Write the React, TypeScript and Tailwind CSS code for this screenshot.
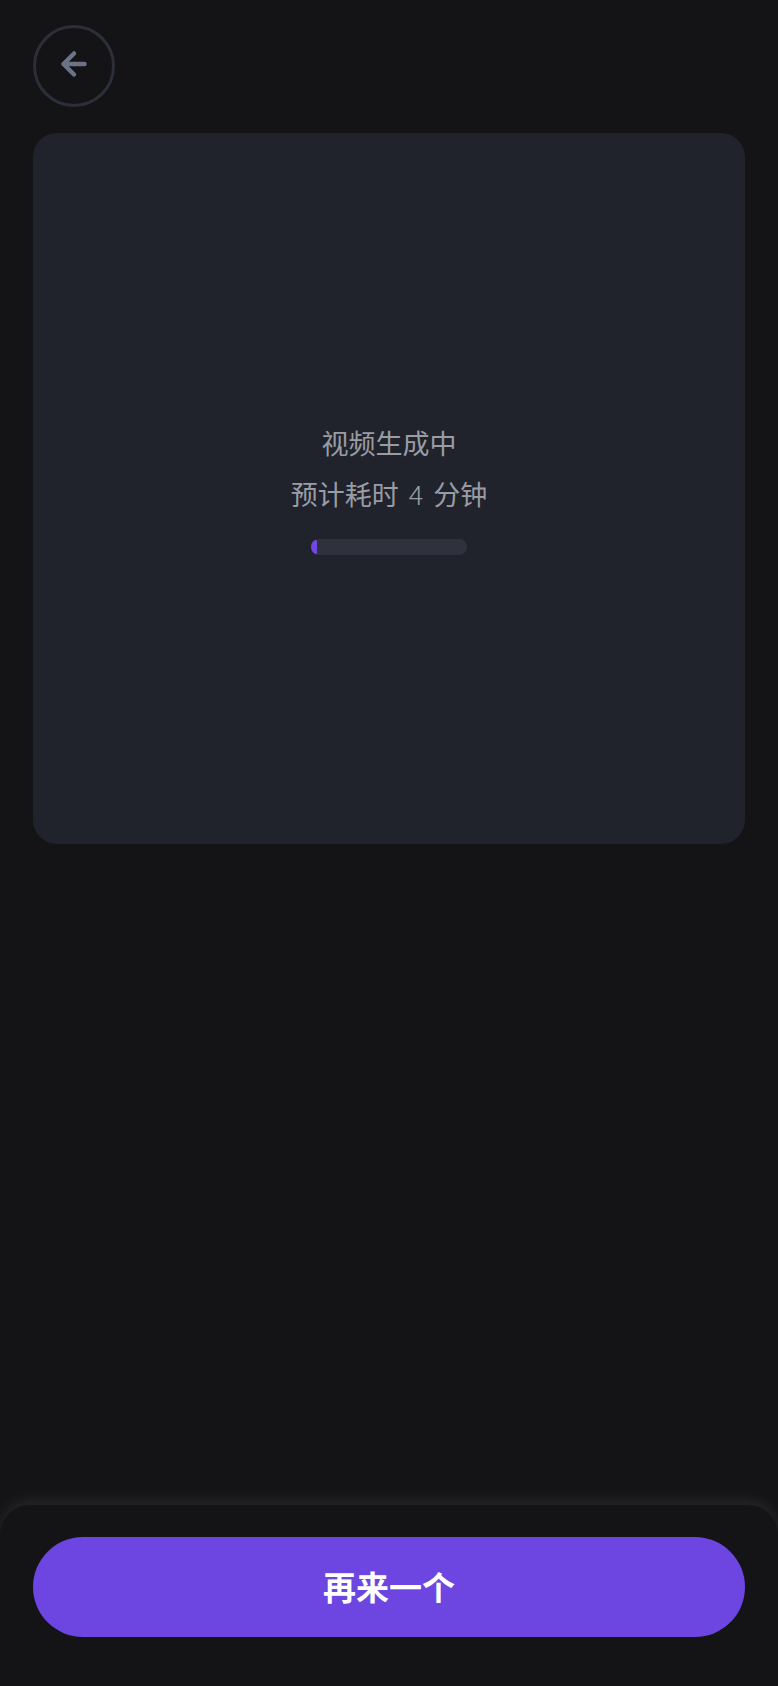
export default function App() {
  return (
    <main
      className="h-screen w-full bg-[#141416] flex flex-col overflow-hidden"
      style={{ fontFamily: '"Noto Sans CJK SC", "Noto Sans", sans-serif' }}
    >
      <div className="px-[33px] pt-[25px]">
        {/* Back button */}
        <button className="w-[82px] h-[82px] rounded-full border-[3px] border-[#2c2f38] flex items-center justify-center">
          <svg width="32" height="32" viewBox="0 0 32 32" fill="none" className="mb-[4px]">
            <path
              d="M26.5 16H5.5M16 5.5L5.5 16L16 26.5"
              stroke="#6b7386"
              strokeWidth="4.5"
              strokeLinecap="round"
              strokeLinejoin="round"
            />
          </svg>
        </button>

        {/* Preview card */}
        <div className="mt-[26px] h-[711px] rounded-[24px] bg-[#20232b] flex flex-col items-center justify-center">
          <p className="text-[27px] leading-[40px] text-[#9a9ca5]">视频生成中</p>
          <p className="mt-[11px] text-[27px] leading-[40px] text-[#9a9ca5] flex items-center">
            <span>预计耗时</span>
            <span className="mx-[10px] font-light">4</span>
            <span>分钟</span>
          </p>
          <div className="mt-[25px] w-[156px] h-[16px] rounded-full bg-[#2f313c] overflow-hidden">
            <div className="h-full bg-[#7147e6] rounded-full" style={{ width: "6px" }} />
          </div>
        </div>
      </div>

      {/* Bottom action panel */}
      <div className="mt-auto h-[181px] rounded-t-[30px] bg-[#141416] shadow-[0_-6px_14px_rgba(255,255,255,0.07)] px-[33px] pt-[32px]">
        <button className="w-full h-[100px] rounded-full bg-[#6d45e1] text-white text-[33px] font-semibold">
          再来一个
        </button>
      </div>
    </main>
  );
}
